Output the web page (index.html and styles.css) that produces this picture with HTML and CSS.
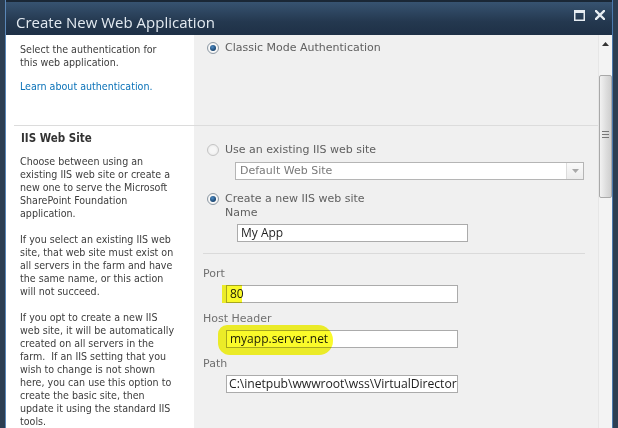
FILE: index.html
```html
<!DOCTYPE html>
<html>
<head>
<meta charset="utf-8">
<link rel="stylesheet" href="styles.css">
</head>
<body>
<div class="dialog">
  <div class="titlebar">
    <div class="title">Create New Web Application</div>
    <div class="tb-icons">
      <svg class="ico" width="11" height="11" viewBox="0 0 11 11"><rect x="0.75" y="0.75" width="9.5" height="9.5" fill="none" stroke="#e6edf3" stroke-width="1.5"/><rect x="0" y="0" width="11" height="3" fill="#e6edf3"/></svg>
      <svg class="ico" width="10" height="10" viewBox="0 0 10 10"><path d="M1 1 L9 9 M9 1 L1 9" stroke="#e6edf3" stroke-width="2.4" stroke-linecap="square"/></svg>
    </div>
  </div>
  <div class="main">
    <div class="content">
      <div class="section s1">
        <div class="desc">
          <div class="desc-in">
            <p>Select the authentication for<br>this web application.</p>
            <a class="link">Learn about authentication.</a>
          </div>
        </div>
        <div class="ctrl">
          <div class="ctrl-in">
            <div class="radio-row"><span class="radio on"></span><span>Classic Mode Authentication</span></div>
          </div>
        </div>
      </div>
      <div class="section s2">
        <div class="desc">
          <div class="desc-in">
            <h3>IIS Web Site</h3>
            <p>Choose between using an<br>existing IIS web site or create a<br>new one to serve the Microsoft<br>SharePoint Foundation<br>application.</p>
            <p>If you select an existing IIS web<br>site, that web site must exist on<br>all servers in the farm and have<br>the same name, or this action<br>will not succeed.</p>
            <p>If you opt to create a new IIS<br>web site, it will be automatically<br>created on all servers in the<br>farm.&nbsp; If an IIS setting that you<br>wish to change is not shown<br>here, you can use this option to<br>create the basic site, then<br>update it using the standard IIS<br>tools.</p>
          </div>
        </div>
        <div class="ctrl">
          <div class="ctrl-in">
            <div class="radio-row"><span class="radio off"></span><span>Use an existing IIS web site</span></div>
            <div class="select"><span class="sel-text">Default Web Site</span><span class="sel-btn"><svg width="7" height="4" viewBox="0 0 7 4"><path d="M0 0 L7 0 L3.5 4 Z" fill="#a8a8a8"/></svg></span></div>
            <div class="radio-row r2"><span class="radio on"></span><span>Create a new IIS web site</span></div>
            <div class="name-lbl">Name</div>
            <div class="input name-in">My App</div>
          </div>
          <div class="sub">
            <div class="lbl">Port</div>
            <div class="input">80</div>
            <div class="lbl">Host Header</div>
            <div class="input">myapp.server.net</div>
            <div class="lbl">Path</div>
            <div class="input path-in">C:\inetpub\wwwroot\wss\VirtualDirector</div>
          </div>
        </div>
      </div>
    </div>
    <div class="scrollbar">
      <div class="arrow"><svg width="7" height="4" viewBox="0 0 7 4"><path d="M0 4 L7 4 L3.5 0 Z" fill="#333"/></svg></div>
      <div class="thumb"><span class="grip"></span></div>
    </div>
  </div>
</div>
<div class="hl hl-port"></div>
<div class="hl hl-host"></div>
</body>
</html>
```
FILE: styles.css
```css
html, body {
  margin: 0;
  padding: 0;
}
body {
  width: 618px;
  height: 428px;
  overflow: hidden;
  background: #2c3e52;
  position: relative;
  font-family: "DejaVu Sans", Verdana, sans-serif;
}
.dialog {
  margin-left: 5px;
  width: 606px;
  height: 428px;
  border-left: 1px solid #5b87b7;
  border-right: 1px solid #4a79ae;
  display: flex;
  flex-direction: column;
}
.titlebar {
  flex: none;
  height: 33px;
  border-top: 2px solid #1a2736;
  background: linear-gradient(#375371, #24384f 60%, #1e3046);
  display: flex;
  align-items: center;
  justify-content: space-between;
}
.title {
  font-family: "Open Sans", sans-serif;
  font-size: 15px;
  color: #e3eaf1;
  padding-left: 10px;
  margin-top: 6px;
}
.tb-icons {
  display: flex;
  align-items: center;
  gap: 10px;
  padding-right: 7px;
  margin-top: -7px;
}
.main {
  flex: 1;
  display: flex;
  min-height: 0;
}
.content {
  flex: 1;
  display: flex;
  flex-direction: column;
  background: linear-gradient(to right, #fff 188px, #f0f0f0 188px);
}
.section {
  display: flex;
}
.s1 { height: 90px; flex: none; }
.s2 { flex: 1; }
.desc {
  width: 188px;
  background: #fff;
}
.s2 .desc-in {
  margin-left: 8px;
  border-top: 1px solid #dcdcdc;
  padding: 5px 0 0 6px;
}
.s1 .desc-in {
  padding: 8px 0 0 14px;
}
.desc p {
  margin: 0 0 13px 0;
  font-family: "DejaVu Sans Condensed", "DejaVu Sans", sans-serif;
  font-size: 10.6px;
  line-height: 13px;
  color: #3c3c3c;
}
.s1 .desc p { margin-bottom: 11px; }
.link {
  display: block;
  font-family: "DejaVu Sans Condensed", "DejaVu Sans", sans-serif;
  font-size: 10.6px;
  line-height: 13px;
  color: #0a72b8;
}
.desc h3 {
  margin: 0 0 10px 1px;
  font-family: "DejaVu Sans Condensed", "DejaVu Sans", sans-serif;
  font-size: 11.5px;
  font-weight: bold;
  line-height: 14px;
  color: #333;
}
.ctrl {
  flex: 1;
  background: #f0f0f0;
  font-size: 11px;
  line-height: 14px;
  color: #606060;
}
.s2 .ctrl { border-top: 1px solid #dcdcdc; }
.ctrl-in { padding-left: 13px; }
.s1 .ctrl-in { padding-top: 6px; }
.s2 .ctrl-in { padding-top: 17px; }
.radio-row {
  display: flex;
  align-items: center;
  gap: 6px;
}
.radio {
  width: 12px;
  height: 12px;
  border-radius: 50%;
  box-sizing: border-box;
  border: 1px solid #8e9aa5;
  background: radial-gradient(circle, #fff 40%, #e2e2e2 100%);
  position: relative;
}
.radio.on::after {
  content: "";
  position: absolute;
  left: 2px;
  top: 2px;
  width: 6px;
  height: 6px;
  border-radius: 50%;
  background: radial-gradient(circle at 40% 35%, #4f8cc4, #143f6a 75%);
}
.radio.off {
  border-color: #c4c4c4;
  background: radial-gradient(circle, #f6f6f6 40%, #e3e3e3 100%);
}
.select {
  margin: 5px 0 0 28px;
  width: 349px;
  height: 18px;
  box-sizing: border-box;
  border: 1px solid #b5b5b5;
  background: #fff;
  display: flex;
  align-items: center;
  justify-content: space-between;
}
.sel-text {
  padding-left: 4px;
  color: #7a7a7a;
}
.sel-btn {
  width: 16px;
  height: 16px;
  border-left: 1px solid #dcdcdc;
  background: linear-gradient(#fafafa, #ececec);
  display: flex;
  align-items: center;
  justify-content: center;
}
.r2 { margin-top: 12px; }
.name-lbl {
  margin-left: 18px;
}
.input {
  margin: 4px 0 0 23px;
  width: 232px;
  height: 18px;
  box-sizing: border-box;
  border: 1px solid #ababab;
  background: #fff;
  font-family: "Open Sans", sans-serif;
  font-size: 12px;
  line-height: 16px;
  color: #1e1e1e;
  padding-left: 3px;
  white-space: nowrap;
  overflow: hidden;
}
.path-in { font-size: 12.2px; letter-spacing: -0.05px; padding-left: 2px; }
.name-in {
  margin-left: 30px;
  width: 231px;
}
.sub {
  margin: 11px 13px 0 9px;
  border-top: 1px solid #dadada;
  padding-top: 13px;
}
.lbl { color: #707070; }
.sub .lbl + .input { margin-top: 4px; }
.sub .input + .lbl { margin-top: 9px; }
.scrollbar {
  width: 14px;
  background: #f3f3f3;
  border-left: 1px solid #e6e6e6;
  box-sizing: border-box;
  display: flex;
  flex-direction: column;
  align-items: center;
}
.arrow {
  height: 16px;
  margin-top: 7px;
  display: flex;
  align-items: flex-start;
}
.thumb {
  margin-top: 17px;
  width: 13px;
  height: 123px;
  box-sizing: border-box;
  border: 1px solid #a9a9a9;
  border-radius: 2px;
  background: linear-gradient(to right, #f2f2f2, #dcdcdc 60%, #cfcfcf);
  display: flex;
  justify-content: center;
}
.grip {
  margin-top: 55px;
  width: 7px;
  height: 7px;
  background: repeating-linear-gradient(#777 0 1px, transparent 1px 3px);
}
.hl {
  position: absolute;
  background: #fafa2a;
  mix-blend-mode: multiply;
}
.hl-port {
  left: 222px;
  top: 285px;
  width: 20px;
  height: 18px;
}
.hl-host {
  left: 218px;
  top: 325px;
  width: 115px;
  height: 30px;
  border-radius: 9px 15px 14px 12px;
}
```
